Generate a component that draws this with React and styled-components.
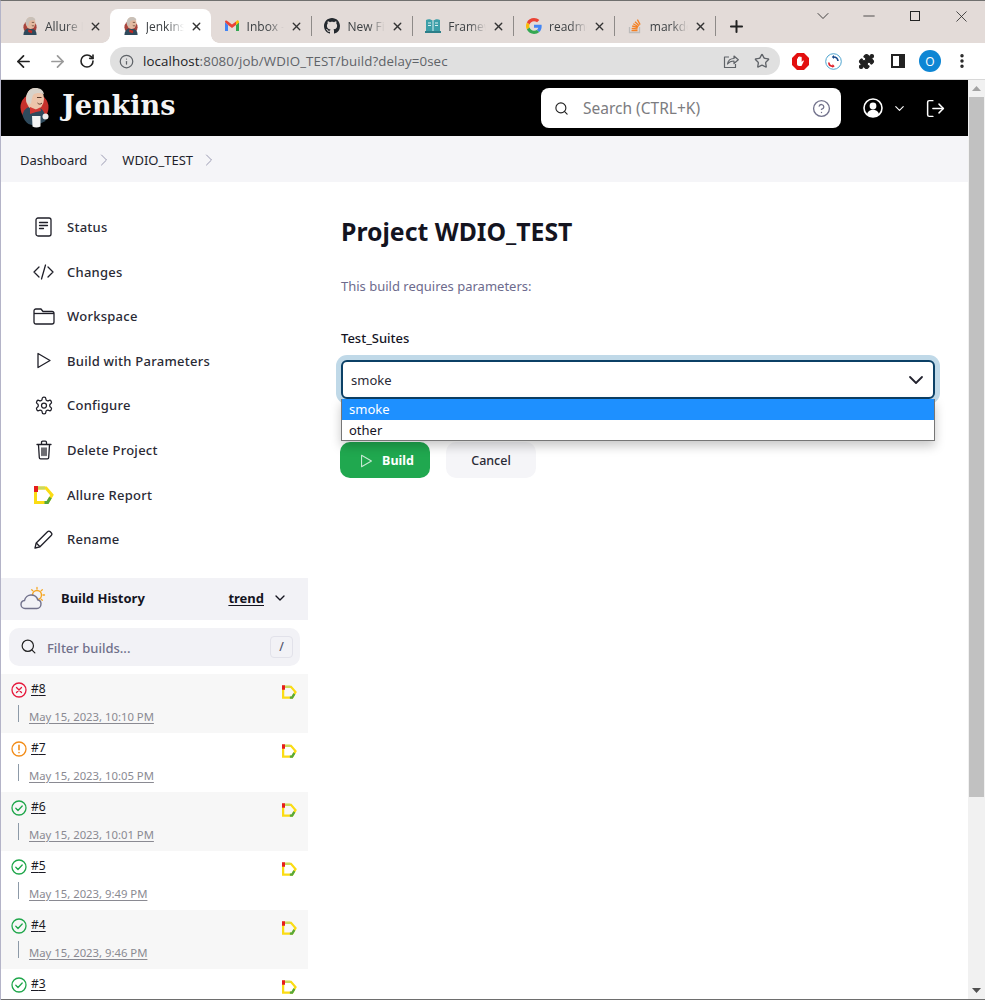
import React from "react";
import styled, { createGlobalStyle } from "styled-components";
import { ChevronDown, ChevronRight, Search, X, Plus, ArrowLeft, ArrowRight, RotateCw, Info, Star, CircleHelp, LogOut, EllipsisVertical, Minus, Puzzle } from "lucide-react";

const Global = createGlobalStyle`
  html, body { margin: 0; padding: 0; height: 1000px; overflow: hidden; background: #fff; }
  * { box-sizing: border-box; }
  body { font-family: "Noto Sans", "Open Sans", sans-serif; color: #14141f; }
`;

const Frame = styled.div`
  width: 985px; height: 1000px; overflow: hidden; display: flex; flex-direction: column;
  border-left: 1px solid #b4b4c8; border-top: 1px solid #70706f;
`;
const TabStrip = styled.div`
  height: 42px; background: #e3dbd8; display: flex; align-items: flex-end; padding-left: 8px; flex: none;
`;
const Tab = styled.div`
  width: 100.8px; height: 34px; display: flex; align-items: center; gap: 6px;
  padding: 0 8px 0 12px; font-size: 12px; color: #3c4043; position: relative;
  background: ${p => p.$active ? "#fff" : "transparent"};
  border-radius: ${p => p.$active ? "8px 8px 0 0" : "0"};
  &::after {
    content: ""; display: ${p => p.$sep ? "block" : "none"}; position: absolute; right: -1px; top: 7px;
    width: 1px; height: 20px; background: #8e8a88;
  }
`;
const Flare = styled.span`
  position: absolute; bottom: 0; width: 8px; height: 8px;
  ${p => p.$side === "left" ? "left: -8px;" : "right: -8px;"}
  background: radial-gradient(circle at ${p => p.$side === "left" ? "0 0" : "100% 0"}, transparent 7.5px, #fff 8px);
`;
const TabIcon = styled.span`
  width: 18px; height: 18px; display: flex; align-items: center; justify-content: center; flex: none;
`;
const TabTitle = styled.span`
  flex: 1; overflow: hidden; white-space: nowrap; min-width: 0; font-family: "Open Sans", sans-serif;
  -webkit-mask-image: linear-gradient(90deg, #000 55%, transparent 100%);
  mask-image: linear-gradient(90deg, #000 55%, transparent 100%);
`;
const NewTab = styled.div`
  width: 40px; margin-left: 2px; display: flex; justify-content: center; align-items: center; height: 34px; color: #222;
`;
const WinControls = styled.div`
  margin-left: auto; align-self: flex-start; display: flex; height: 30px; align-items: center; padding-right: 1px;
`;
const WinBtn = styled.div`
  width: 46px; display: flex; justify-content: center; align-items: center; color: #222;
`;
const Toolbar = styled.div`
  height: 37px; background: #fff; display: flex; align-items: center; flex: none; border-bottom: 1px solid #d8d8d8;
`;
const NavBtn = styled.div`
  width: ${p => p.$w || 32}px; display: flex; justify-content: center; align-items: center;
  color: ${p => p.$dim ? "#9a9a9a" : "#222"};
`;
const NavGroup = styled.div`
  display: flex; width: 109px; padding-left: 6px; gap: 2px;
`;
const Omnibox = styled.div`
  width: 670px; height: 28px; border-radius: 14px; background: #e0e0e0; display: flex; align-items: center;
  padding: 0 10px 0 9px; font-size: 13.3px; color: #5f6368; gap: 9px;
`;
const UrlHost = styled.span`
  color: #202124;
`;
const UrlText = styled.span`
  flex: 1; font-family: "Open Sans", sans-serif; white-space: nowrap; letter-spacing: .1px;
`;
const OmniIcons = styled.div`
  display: flex; gap: 15px; align-items: center; color: #5f6368;
`;
const ExtRow = styled.div`
  display: flex; align-items: center; padding-left: 4px;
`;
const Avatar = styled.div`
  width: 22px; height: 22px; border-radius: 50%; background: #0e86d4; color: #fff; font-size: 12px;
  display: flex; align-items: center; justify-content: center; font-family: "Open Sans", sans-serif;
`;

const Viewport = styled.div`
  flex: 1; display: flex; min-height: 0; border-bottom: 1px solid #6e6e6e;
`;
const Page = styled.div`
  width: 967px; display: flex; flex-direction: column; overflow: hidden; flex: none;
`;
const Scrollbar = styled.div`
  width: 17px; background: #f1f1f1; display: flex; flex-direction: column; align-items: center; flex: none;
`;
const ScrollArrow = styled.div`
  height: 17px; width: 100%; display: flex; justify-content: center; align-items: center;
  color: ${p => p.$dim ? "#a3a3a3" : "#505050"}; flex: none;
`;
const ScrollThumb = styled.div`
  width: 15px; height: 700px; background: #c1c1c1; flex: none;
`;
const ScrollTrack = styled.div`flex: 1;`;

const Header = styled.header`
  height: 56px; background: #000; display: flex; align-items: center; padding: 0 22px 0 19px; flex: none;
`;
const Brand = styled.div`
  display: flex; align-items: center; gap: 11px;
`;
const BrandName = styled.span`
  font-family: "DejaVu Serif", "Liberation Serif", serif; font-weight: 700; font-size: 27px; line-height: 30px; color: #f4f4f4;
  position: relative; top: -2px;
`;
const SearchBox = styled.div`
  margin-left: auto; width: 300px; height: 40px; background: #fff; border-radius: 8px; display: flex; align-items: center;
  padding: 0 10px 0 13px; gap: 14px; font-size: 15.5px;
`;
const SearchText = styled.span`flex: 1; color: #7c7c80;`;
const HeaderIcons = styled.div`
  display: flex; align-items: center; margin-left: 22px; color: #fff;
`;
const ChevronGap = styled.span`
  display: flex; margin: 0 18px 0 9px;
`;

const Crumbs = styled.nav`
  height: 46px; background: #f5f5f8; display: flex; align-items: center; padding: 1px 0 0 19px; font-size: 13px; flex: none; color: #1f1f2c;
`;
const CrumbSep = styled.span`
  display: flex; color: #9a9ab2; margin: 0 ${p => p.$r}px 0 ${p => p.$l}px;
`;

const Body = styled.div`
  flex: 1; display: flex; min-height: 0;
`;
const Sidebar = styled.aside`
  width: 307px; flex: none; padding-top: 22.7px;
`;
const NavList = styled.div`
  display: flex; flex-direction: column; margin-bottom: 16.5px;
`;
const NavItem = styled.div`
  height: 44.6px; display: flex; align-items: center; padding-left: 31px; gap: 12px; font-size: 13px; letter-spacing: .25px; color: #2a2a35; font-weight: 500;
`;
const NavIcon = styled.span`
  width: 23px; height: 24px; display: flex; align-items: center; justify-content: center; flex: none; color: #1f1f28;
`;
const HistHead = styled.div`
  height: 42px; background: #f2f2f6; display: flex; align-items: center; padding: 0 20px 2px 19px; font-size: 13px; font-weight: 700; color: #14141f;
`;
const HistTitle = styled.span`margin-left: 15px; flex: 1;`;
const Trend = styled.span`
  text-decoration: underline; text-underline-offset: 2px; margin-right: 8px;
`;
const Filter = styled.div`
  margin: 8px; height: 38px; background: #f2f2f6; border-radius: 10px; display: flex; align-items: center; padding: 0 7px 0 11px; gap: 10px;
  font-size: 13px; color: #70708a; font-weight: 500;
`;
const FilterText = styled.span`flex: 1; padding-top: 2px;`;
const Kbd = styled.span`
  width: 23px; height: 22px; border: 1px solid #e2e2ea; border-radius: 4px; display: flex; align-items: center; justify-content: center; font-size: 12px; color: #55556a;
`;
const Row = styled.div`
  height: 59px; background: ${p => p.$odd ? "#f7f7f7" : "#fff"}; display: grid; grid-template-columns: 10px 1fr 30px;
  padding: 6px 0 0 10px;
`;
const RowIcon = styled.span`
  display: flex; grid-column: 1; width: 16px; height: 16px; margin-top: 2px;
`;
const RowMain = styled.div`
  grid-column: 2; padding-left: 10px; display: flex; flex-direction: column;
`;
const BuildNo = styled.span`
  font-size: 12px; text-decoration: underline; text-underline-offset: 2px; color: #1a1a24; line-height: 17px;
`;
const RowDate = styled.div`
  display: flex; align-items: center; margin: 8px 0 0 -13px;
`;
const Rule = styled.span`
  width: 1px; height: 17px; background: #8d9aa8; margin-right: 10px; flex: none;
`;
const DateText = styled.span`
  font-size: 11.3px; color: #8a8a92; text-decoration: underline; text-underline-offset: 2px; line-height: 17px; position: relative; top: 3px;
`;
const RowReport = styled.span`
  grid-column: 3; display: flex; padding-top: 5px; padding-left: 4px;
`;

const Main = styled.main`
  flex: 1; padding: 33px 33px 0 33px; min-width: 0;
`;
const Title = styled.h1`
  margin: 0; font-size: 24.8px; line-height: 32px; font-weight: 700; color: #14141f;
`;
const Lead = styled.p`
  margin: 30px 0 0; font-size: 13px; line-height: 18px; color: #6d6b8d;
`;
const Label = styled.div`
  margin-top: 34px; font-size: 13px; line-height: 18px; font-weight: 500; color: #14141f;
`;
const SelectWrap = styled.div`
  position: relative; margin-top: 13px;
`;
const SelectBox = styled.div`
  height: 39px; border: 2px solid #0b4066; border-radius: 6px; background: #fff; box-shadow: 0 0 0 5px #c0d9e8;
  display: flex; align-items: center; justify-content: space-between; padding: 0 5px 0 8px; font-size: 13px; color: #2a2a35;
`;
const Menu = styled.ul`
  position: absolute; left: 0; right: 0; top: 39px; margin: 0; padding: 0; list-style: none; background: #fff;
  border: 1px solid #767676; border-top: 0; box-shadow: 0 5px 10px rgba(0,0,0,.22); font-size: 13px; z-index: 2;
`;
const MenuItem = styled.li`
  height: 20.5px; line-height: 21px; padding-left: 7px;
  background: ${p => p.$sel ? "#1e90ff" : "#fff"}; color: ${p => p.$sel ? "#fff" : "#14141f"};
`;
const Actions = styled.div`
  margin-top: 6px; margin-left: -1px; display: flex; gap: 16px; padding-top: 37px;
`;
const BuildBtn = styled.div`
  width: 90px; height: 36px; border-radius: 10px; background: #20a84f; color: #fff; font-size: 12.5px; font-weight: 700;
  display: flex; align-items: center; justify-content: center; gap: 9px; padding: 1px 0 0 4px;
`;
const BuildGlyph = styled.span`
  display: flex; opacity: .75;
`;
const CancelBtn = styled.div`
  width: 90px; height: 36px; border-radius: 10px; background: #f5f5f8; color: #2a2a35; font-size: 12.5px; font-weight: 500;
  display: flex; align-items: center; justify-content: center; padding-top: 1px;
`;

const JenkinsHead = ({ size = 18 }) => (
  <svg width={size} height={size} viewBox="0 0 30 30">
    <circle cx="15" cy="17" r="11" fill="#a8433c" />
    <path d="M4 30c0-6 3-10 7-11l9 1c4 1 6 5 6 10z" fill="#2f4a5c" />
    <ellipse cx="16" cy="10" rx="8" ry="10" fill="#e3b9a0" />
    <path d="M8 12C7 5 11 0 17 0c4 0 7 2 7 6-3-1-8-1-10 1-1 2-1 5-2 8-2 0-3-1-4-3z" fill="#c8c0b8" />
    <path d="M12 21l7 2-1 4-6-2z" fill="#c32a24" />
    <path d="M18 9h4M18 14c1 1 3 1 4 0" stroke="#5b3a2b" strokeWidth="1.200" fill="none" />
  </svg>
);

const JenkinsLogo = () => (
  <svg width="31" height="40" viewBox="0 0 31 40" style={{ display: "block" }}>
    <circle cx="14.500" cy="19.500" r="14" fill="#c6302b" />
    <path d="M2.500 27c1-5 4-8 8-8l9 1c3 1 5 4 5.500 8l.5 5-10 5-7-2c-3-2-5-5-6-9z" fill="#2f4a5c" />
    <ellipse cx="15" cy="11" rx="9" ry="11" fill="#ecc4aa" />
    <path d="M6.500 14C5 6 9 0 15.500 0c4.500 0 8 2 8.500 6.500-3-2-8-2-10.500 0-1.500 1.500-1.500 5-2.500 9-2 .5-3.500 0-4.500-1.500z" fill="#d8d2ca" />
    <path d="M10 19l6 2.500 4-2 1 3.500-5 1-6 2z" fill="#d33833" />
    <path d="M17 9.500h4.500M17.500 15c1.500 1.500 3 1.500 4.500 0" stroke="#5b3a2b" strokeWidth="1" fill="none" />
    <path d="M12 28h8.500v10.500c-2.500 1.200-6 1.200-8 0z" fill="#f4f4f4" />
    <circle cx="25.500" cy="28.500" r="3" fill="#ececec" />
  </svg>
);

const Allure = ({ w = 20, h = 18 }) => (
  <svg width={w} height={h} viewBox="0 0 20 18" style={{ display: "block" }}>
    <path d="M1.500 2H12L18 9l-4.500 7.500H1.500z" fill="none" stroke="#fbdc14" strokeWidth="3" />
    <path d="M0 0h4v6H0z" fill="#e61c1c" />
    <path d="M4 2h7" stroke="#c9d860" strokeWidth="3" fill="none" />
    <path d="M16.500 11.500l-3 5h-3" stroke="#55a83c" strokeWidth="3" fill="none" />
  </svg>
);

const GoogleIcon = () => (
  <svg width="16" height="16" viewBox="0 0 48 48">
    <path fill="#EA4335" d="M24 9.500c3.500 0 6.700 1.200 9.200 3.600l6.900-6.900C35.900 2.400 30.500 0 24 0 14.600 0 6.500 5.400 2.600 13.200l8 6.200C12.500 13.600 17.800 9.500 24 9.500z"/>
    <path fill="#4285F4" d="M47 24.500c0-1.600-.1-3.100-.4-4.500H24v9h12.900c-.6 3-2.200 5.500-4.700 7.200l7.700 6C44.400 38 47 31.800 47 24.500z"/>
    <path fill="#FBBC05" d="M10.600 28.600c-.5-1.400-.8-3-.8-4.600s.3-3.200.8-4.600l-8-6.200C.9 16.500 0 20.100 0 24s.9 7.500 2.600 10.800z"/>
    <path fill="#34A853" d="M24 48c6.500 0 11.900-2.100 15.900-5.800l-7.700-6c-2.100 1.400-4.900 2.300-8.200 2.300-6.200 0-11.500-4.200-13.400-9.900l-8 6.200C6.500 42.600 14.600 48 24 48z"/>
  </svg>
);
const GmailIcon = () => (
  <svg width="16" height="16" viewBox="0 0 16 16">
    <path d="M1 4v9h3V7z" fill="#4285f4" /><path d="M12 7v6h3V4z" fill="#34a853" />
    <path d="M1 4l3 3 4 3 4-3 0-3.500L8 6.500 4 3.500 2.500 2.500C1.500 2.300 1 3 1 4z" fill="#ea4335" />
    <path d="M12 3.500V7l3-2.500V4c0-1.200-1.300-2-2-1.500z" fill="#fbbc04" />
  </svg>
);
const GithubIcon = () => (
  <svg width="16" height="16" viewBox="0 0 16 16" fill="#24292e">
    <path d="M8 0C3.580 0 0 3.580 0 8c0 3.540 2.290 6.530 5.470 7.590.4.070.55-.17.55-.38 0-.19-.01-.82-.01-1.490-2.010.37-2.530-.49-2.690-.94-.09-.23-.48-.94-.82-1.130-.28-.15-.68-.52-.01-.53.63-.01 1.080.58 1.230.82.720 1.210 1.870.87 2.330.66.070-.52.280-.87.510-1.070-1.780-.2-3.640-.89-3.640-3.950 0-.87.310-1.590.820-2.150-.08-.2-.36-1.020.08-2.120 0 0 .67-.21 2.200.82.640-.18 1.320-.27 2-.27s1.360.09 2 .27c1.530-1.040 2.200-.82 2.200-.82.44 1.100.16 1.920.08 2.120.51.560.82 1.270.82 2.150 0 3.070-1.870 3.750-3.650 3.950.29.250.54.730.54 1.480 0 1.070-.01 1.930-.01 2.200 0 .21.150.46.550.38A8.010 8.010 0 0016 8c0-4.420-3.580-8-8-8z" />
  </svg>
);
const BookIcon = () => (
  <svg width="16" height="16" viewBox="0 0 16 16">
    <path d="M1 2c2-1 5-1 7 1 2-2 5-2 7-1v11H1z" fill="#3c9fa8" />
    <path d="M8 3v10M3 5h3M3 7.500h3M10 5h3M10 7.500h3" stroke="#d8eef0" strokeWidth="1" />
    <path d="M0 13h16v2H0z" fill="#2c7e88" />
  </svg>
);
const StackIcon = () => (
  <svg width="16" height="16" viewBox="0 0 16 16" fill="none">
    <path d="M2.500 9v5.500h10V9" stroke="#bcbbbb" strokeWidth="1.300" />
    <path d="M4.500 12.500h6M4.700 10.300l5.800.6M5.200 8l5.600 1.500M6.300 5.800l5 2.900M8 3.700l4.200 4M10.400 1.600l2.700 5" stroke="#f48024" strokeWidth="1.300" />
  </svg>
);

const tabs = [
  { icon: <JenkinsHead />, t: "Allure Report" },
  { icon: <JenkinsHead />, t: "Jenkins", active: true },
  { icon: <GmailIcon />, t: "Inbox - mail", sep: true },
  { icon: <GithubIcon />, t: "New File", sep: true },
  { icon: <BookIcon />, t: "Framework", sep: true },
  { icon: <GoogleIcon />, t: "readme file", sep: true },
  { icon: <StackIcon />, t: "markdown", sep: true },
];

const StatusIcon = () => (
  <svg width="17" height="20" viewBox="0 0 17 20" fill="none" stroke="currentColor" strokeWidth="1.300" strokeLinecap="round">
    <rect x="1" y="1" width="15" height="18" rx="2" /><path d="M4.500 5.500h8M4.500 8.500h8M4.500 11.500h4" />
  </svg>
);
const CodeIcon = () => (
  <svg width="21" height="16" viewBox="0 0 21 16" fill="none" stroke="currentColor" strokeWidth="1.300" strokeLinecap="round" strokeLinejoin="round">
    <path d="M6 3L1 8l5 5M15 3l5 5-5 5M12.500 1L8.500 15" />
  </svg>
);
const FolderIcon = () => (
  <svg width="22" height="17" viewBox="0 0 22 17" fill="none" stroke="currentColor" strokeWidth="1.300" strokeLinejoin="round">
    <path d="M1 3c0-1 .6-2 2-2h5l2 2.500h9c1.400 0 2 .8 2 2V14c0 1.200-.8 2-2 2H3c-1.200 0-2-.8-2-2z" /><path d="M1 5.500h20" />
  </svg>
);
const PlayIcon = ({ s = 16, h = 17 }) => (
  <svg width={s} height={h} viewBox="0 0 15 17" fill="none" stroke="currentColor" strokeWidth="1.300" strokeLinejoin="round">
    <path d="M1.500 1.500v14l12-7z" />
  </svg>
);
const GearIcon = () => (
  <svg width="20" height="21" viewBox="0 0 24 24" fill="none" stroke="currentColor" strokeWidth="1.500" strokeLinecap="round" strokeLinejoin="round">
    <path d="M12.220 2h-.44a2 2 0 0 0-2 2v.18a2 2 0 0 1-1 1.730l-.43.250a2 2 0 0 1-2 0l-.15-.08a2 2 0 0 0-2.730.730l-.22.380a2 2 0 0 0 .730 2.730l.15.100a2 2 0 0 1 1 1.720v.510a2 2 0 0 1-1 1.740l-.15.090a2 2 0 0 0-.73 2.730l.22.380a2 2 0 0 0 2.730.730l.15-.08a2 2 0 0 1 2 0l.43.250a2 2 0 0 1 1 1.730V20a2 2 0 0 0 2 2h.44a2 2 0 0 0 2-2v-.18a2 2 0 0 1 1-1.730l.43-.250a2 2 0 0 1 2 0l.15.080a2 2 0 0 0 2.730-.730l.22-.390a2 2 0 0 0-.730-2.730l-.15-.080a2 2 0 0 1-1-1.740v-.500a2 2 0 0 1 1-1.740l.15-.090a2 2 0 0 0 .730-2.730l-.22-.380a2 2 0 0 0-2.730-.730l-.15.080a2 2 0 0 1-2 0l-.43-.250a2 2 0 0 1-1-1.730V4a2 2 0 0 0-2-2z" />
    <circle cx="12" cy="12" r="3" />
  </svg>
);
const TrashIcon = () => (
  <svg width="16" height="20" viewBox="0 0 16 20" fill="none" stroke="currentColor" strokeWidth="1.300" strokeLinecap="round" strokeLinejoin="round">
    <path d="M1 4.500h14M5.500 4V2.500c0-.8.500-1.300 1.200-1.300h2.600c.7 0 1.200.5 1.200 1.300V4M2.500 5l.8 12.500c0 .8.600 1.300 1.300 1.300h6.800c.7 0 1.300-.5 1.300-1.300L13.500 5M6 8v7.500M8 8v7.500M10 8v7.500" />
  </svg>
);
const PencilIcon = () => (
  <svg width="19" height="19" viewBox="0 0 19 19" fill="none" stroke="currentColor" strokeWidth="1.300" strokeLinejoin="round">
    <path d="M1 18l1.200-5L13.500 1.800c.8-.8 2-.8 2.800 0l.9.900c.8.800.8 2 0 2.800L6 16.800z" /><path d="M2.200 13L6 16.800" />
  </svg>
);
const CloudIcon = () => (
  <svg width="26" height="24" viewBox="0 0 26 24" fill="none">
    <circle cx="17" cy="9" r="4.500" stroke="#f5a623" strokeWidth="1.400" />
    <path d="M17 1.500V3M24.500 9H23M22.300 3.700l-1.200 1.200M11.700 3.700l1.200 1.200M22.300 14.300l-1.200-1.200" stroke="#f5a623" strokeWidth="1.300" strokeLinecap="round" />
    <path d="M5 22.500C2.800 22.500 1 20.800 1 18.500s1.500-3.800 3.500-4C5.200 11.300 8 9 11 9c3.500 0 6 2 6.800 5 1.900.2 3.200 1.800 3.200 3.800 0 2.600-1.800 4.700-4 4.700z" fill="#f2f2f6" stroke="#72728c" strokeWidth="1.400" strokeLinejoin="round" />
  </svg>
);
const StateIcon = ({ kind }) => {
  const color = { fail: "#e6193c", warn: "#f28c18", ok: "#1ea64a" }[kind];
  return (
    <svg width="16" height="16" viewBox="0 0 16 16" fill="none" stroke={color} strokeWidth="1.300" strokeLinecap="round" strokeLinejoin="round">
      <circle cx="8" cy="8" r="7" />
      {kind === "fail" && <path d="M5.500 5.500l5 5M10.500 5.500l-5 5" />}
      {kind === "warn" && <path d="M8 4.200v4.600M8 11.500v.1" strokeWidth="1.600" />}
      {kind === "ok" && <path d="M4.800 8.300l2.200 2.200 4.200-4.500" />}
    </svg>
  );
};
const UserIcon = () => (
  <svg width="20" height="20" viewBox="0 0 20 20">
    <circle cx="10" cy="10" r="9" fill="none" stroke="#fff" strokeWidth="1.600" />
    <circle cx="10" cy="8" r="3.400" fill="#fff" />
    <path d="M4 16c1-3 3.500-4.300 6-4.300s5 1.300 6 4.300c-1.500 1.700-3.700 3-6 3s-4.500-1.300-6-3z" fill="#fff" />
  </svg>
);
const AdblockIcon = () => (
  <svg width="17" height="17" viewBox="0 0 17 17">
    <path d="M5 0h7l5 5v7l-5 5H5l-5-5V5z" fill="#e30f0f" />
    <path d="M5 9V6c0-1 1-1 1 0V4.500c0-1 1.200-1 1.200 0V4c0-1 1.300-1 1.300 0v.5c0-1 1.200-1 1.200 0V9l1-1.300c.7-.7 1.500 0 1 .7L9.500 13H7c-1.200 0-2-1-2-2z" fill="#fff" />
  </svg>
);
const SyncIcon = () => (
  <svg width="17" height="17" viewBox="0 0 17 17" fill="none">
    <circle cx="8.500" cy="8.500" r="7.800" stroke="#3a9ac9" strokeWidth=".9" />
    <path d="M3.800 9.500C4 12 6 13.300 8 13.300" stroke="#e0202a" strokeWidth="1.700" />
    <path d="M7.500 11l2.200 2.300-2.200 1.500z" fill="#e0202a" />
    <path d="M13 8c-.3-2.500-2.300-4-4.500-4" stroke="#1a4a8c" strokeWidth="1.700" />
    <path d="M9 2l-2.200 2L9 6z" fill="#1a4a8c" />
  </svg>
);
const PuzzleSolid = () => <Puzzle size={17} fill="#222" strokeWidth={1.500} color="#222" />;
const SidePanelIcon = () => (
  <svg width="14" height="14" viewBox="0 0 14 14"><path d="M0 0h14v14H0z" fill="#222" /><path d="M2 2h6v10H2z" fill="#fff" /></svg>
);
const ShareIcon = () => (
  <svg width="16" height="16" viewBox="0 0 16 16" fill="none" stroke="currentColor" strokeWidth="1.200" strokeLinejoin="round">
    <path d="M6 4H1.500v10.500h11V11" />
    <path d="M4.500 11c.5-3.500 3-5.500 6.500-5.500V3l4.300 3.800L11 10.500V8c-2.800 0-5 1-6.500 3z" />
  </svg>
);
const MaxIcon = () => (
  <svg width="10" height="10" viewBox="0 0 10 10" fill="none" stroke="currentColor" strokeWidth="1"><rect x=".5" y=".5" width="9" height="9" /></svg>
);

const nav = [
  [<StatusIcon />, "Status"], [<CodeIcon />, "Changes"], [<FolderIcon />, "Workspace"], [<PlayIcon />, "Build with Parameters"],
  [<GearIcon />, "Configure"], [<TrashIcon />, "Delete Project"], [<Allure />, "Allure Report"], [<PencilIcon />, "Rename"],
];
const builds = [
  ["8", "fail", "May 15, 2023, 10:10 PM"], ["7", "warn", "May 15, 2023, 10:05 PM"], ["6", "ok", "May 15, 2023, 10:01 PM"],
  ["5", "ok", "May 15, 2023, 9:49 PM"], ["4", "ok", "May 15, 2023, 9:46 PM"], ["3", "ok", "May 15, 2023, 9:41 PM"],
];

export default function App() {
  return (
    <Frame>
      <Global />
      <TabStrip>
        {tabs.map(t => (
          <Tab key={t.t} $active={t.active} $sep={t.sep}>
            {t.active && <Flare $side="left" />}
            <TabIcon>{t.icon}</TabIcon>
            <TabTitle>{t.t}</TabTitle>
            <X size={13} strokeWidth={2.500} color="#333" />
            {t.active && <Flare $side="right" />}
          </Tab>
        ))}
        <NewTab><Plus size={19} strokeWidth={2.500} /></NewTab>
        <WinControls>
          <WinBtn><ChevronDown size={20} strokeWidth={1} /></WinBtn>
          <WinBtn><Minus size={18} strokeWidth={1} /></WinBtn>
          <WinBtn><MaxIcon /></WinBtn>
          <WinBtn><X size={19} strokeWidth={1} /></WinBtn>
        </WinControls>
      </TabStrip>
      <Toolbar>
        <NavGroup>
          <NavBtn><ArrowLeft size={19} strokeWidth={2.200} /></NavBtn>
          <NavBtn $dim><ArrowRight size={19} strokeWidth={2.200} /></NavBtn>
          <NavBtn $w={24}><RotateCw size={16} strokeWidth={2.400} /></NavBtn>
        </NavGroup>
        <Omnibox>
          <Info size={15} strokeWidth={2} />
          <UrlText><UrlHost>localhost</UrlHost>:8080/job/WDIO_TEST/build?delay=0sec</UrlText>
          <OmniIcons>
            <ShareIcon />
            <Star size={16} strokeWidth={2} />
          </OmniIcons>
        </Omnibox>
        <ExtRow>
          <NavBtn $w={33}><AdblockIcon /></NavBtn>
          <NavBtn $w={33}><SyncIcon /></NavBtn>
          <NavBtn $w={32}><PuzzleSolid /></NavBtn>
          <NavBtn $w={32}><SidePanelIcon /></NavBtn>
          <NavBtn $w={32}><Avatar>O</Avatar></NavBtn>
          <NavBtn $w={32}><EllipsisVertical size={18} strokeWidth={2.600} /></NavBtn>
        </ExtRow>
      </Toolbar>
      <Viewport>
        <Page>
          <Header>
            <Brand>
              <JenkinsLogo />
              <BrandName>Jenkins</BrandName>
            </Brand>
            <SearchBox>
              <Search size={15} color="#222" strokeWidth={1.800} />
              <SearchText>Search (CTRL+K)</SearchText>
              <CircleHelp size={19} color="#72728c" strokeWidth={1.700} />
            </SearchBox>
            <HeaderIcons>
              <UserIcon />
              <ChevronGap><ChevronDown size={15} strokeWidth={1.800} /></ChevronGap>
              <LogOut size={21} strokeWidth={1.700} />
            </HeaderIcons>
          </Header>
          <Crumbs>
            <span>Dashboard</span>
            <CrumbSep $l={7} $r={8}><ChevronRight size={20} strokeWidth={1.200} /></CrumbSep>
            <span>WDIO_TEST</span>
            <CrumbSep $l={6} $r={0}><ChevronRight size={20} strokeWidth={1.200} /></CrumbSep>
          </Crumbs>
          <Body>
            <Sidebar>
              <NavList>
                {nav.map(([icon, label]) => (
                  <NavItem key={label}><NavIcon>{icon}</NavIcon>{label}</NavItem>
                ))}
              </NavList>
              <HistHead>
                <CloudIcon />
                <HistTitle>Build History</HistTitle>
                <Trend>trend</Trend>
                <ChevronDown size={16} strokeWidth={2} />
              </HistHead>
              <Filter>
                <Search size={17} color="#222" strokeWidth={1.700} />
                <FilterText>Filter builds...</FilterText>
                <Kbd>/</Kbd>
              </Filter>
              {builds.map(([n, kind, date], i) => (
                <Row key={n} $odd={i % 2 === 0}>
                  <RowIcon><StateIcon kind={kind} /></RowIcon>
                  <RowMain>
                    <BuildNo>#{n}</BuildNo>
                    <RowDate><Rule /><DateText>{date}</DateText></RowDate>
                  </RowMain>
                  <RowReport><Allure w={15} h={14} /></RowReport>
                </Row>
              ))}
            </Sidebar>
            <Main>
              <Title>Project WDIO_TEST</Title>
              <Lead>This build requires parameters:</Lead>
              <Label>Test_Suites</Label>
              <SelectWrap>
                <SelectBox>
                  <span>smoke</span>
                  <ChevronDown size={24} strokeWidth={1.800} color="#22222e" />
                </SelectBox>
                <Menu>
                  <MenuItem $sel>smoke</MenuItem>
                  <MenuItem>other</MenuItem>
                </Menu>
              </SelectWrap>
              <Actions>
                <BuildBtn><BuildGlyph><PlayIcon s={13} h={14} /></BuildGlyph>Build</BuildBtn>
                <CancelBtn>Cancel</CancelBtn>
              </Actions>
            </Main>
          </Body>
        </Page>
        <Scrollbar>
          <ScrollArrow $dim><svg width="9" height="5" viewBox="0 0 9 5"><path d="M0 5h9L4.500 0z" fill="currentColor" /></svg></ScrollArrow>
          <ScrollThumb />
          <ScrollTrack />
          <ScrollArrow><svg width="9" height="5" viewBox="0 0 9 5"><path d="M0 0h9L4.500 5z" fill="currentColor" /></svg></ScrollArrow>
        </Scrollbar>
      </Viewport>
    </Frame>
  );
}
